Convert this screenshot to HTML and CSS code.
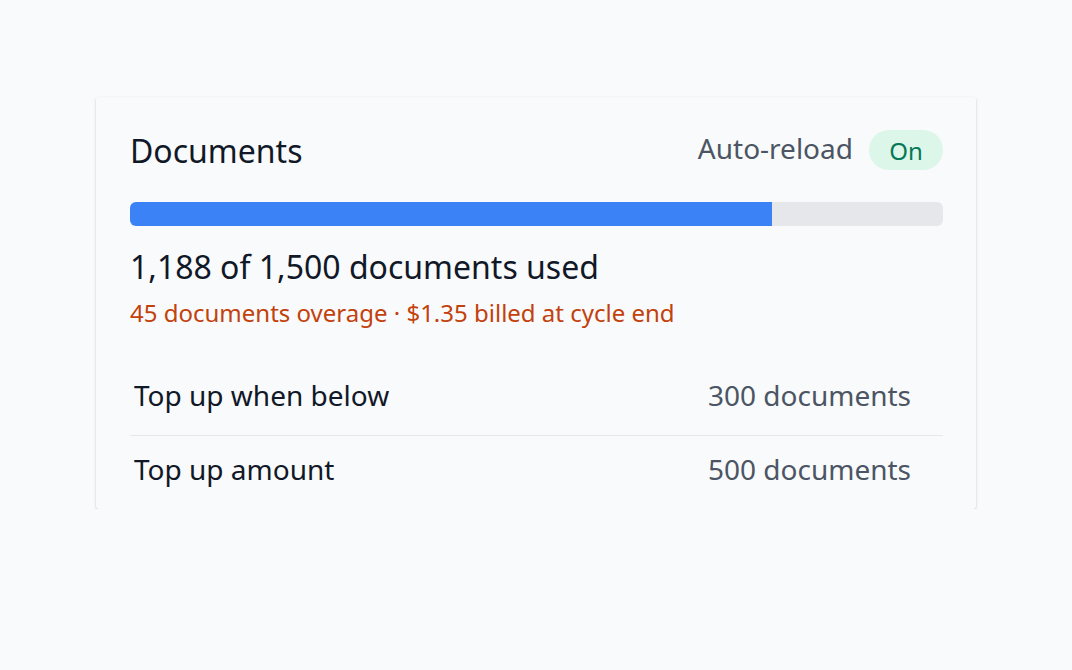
FILE: index.html
```html
<!DOCTYPE html>
<html>
<head>
    <title>Documents</title>
    <link rel="stylesheet" href="styles.css">
</head>
<body>
    <div class="card">
        <div class="card-head">
            <h2 class="title">Documents</h2>
            <div class="reload">
                <span class="reload-label">Auto-reload</span>
                <span class="pill">On</span>
            </div>
        </div>
        <div class="bar">
            <div class="bar-fill" style="width: 79%"></div>
        </div>
        <p class="usage">1,188 of 1,500 documents used</p>
        <p class="overage">45 documents overage · $1.35 billed at cycle end</p>
        <div class="rows">
            <div class="row">
                <span class="row-label">Top up when below</span>
                <span class="row-value">300 documents</span>
            </div>
            <div class="row">
                <span class="row-label">Top up amount</span>
                <span class="row-value">500 documents</span>
            </div>
        </div>
    </div>
</body>
</html>
```

FILE: styles.css
```css
body {
    margin: 0;
    padding-top: 97px;
    background: #f9fafb;
    font-family: "Noto Sans", sans-serif;
    color: #111827;
}
.card {
    width: 880px;
    margin: 0 auto;
    box-sizing: border-box;
    padding: 30px 33px 0 34px;
    background: #f9fafb;
    border-radius: 3px;
    box-shadow: 0 1px 3px rgba(0, 0, 0, 0.15), 0 1px 2px rgba(0, 0, 0, 0.07);
}
.card-head {
    display: flex;
    justify-content: space-between;
    align-items: center;
    height: 46px;
}
.title {
    margin: 0;
    font-size: 32px;
    font-weight: 400;
}
.reload {
    display: flex;
    align-items: center;
    gap: 16px;
}
.reload-label {
    font-size: 28px;
    color: #4b5563;
    margin-top: -4px;
}
.pill {
    display: inline-flex;
    align-items: center;
    justify-content: center;
    width: 74px;
    height: 40px;
    border-radius: 20px;
    background: #dcf7e9;
    color: #047857;
    font-size: 24px;
}
.bar {
    margin-top: 29px;
    height: 24px;
    border-radius: 6px;
    background: #e5e7eb;
    overflow: hidden;
}
.bar-fill {
    height: 100%;
    background: #3b82f6;
}
.usage {
    margin: 20px 0 0;
    font-size: 32px;
    line-height: 42px;
}
.overage {
    margin: 9px 0 0;
    font-size: 24px;
    line-height: 32px;
    color: #c2410c;
}
.rows {
    margin-top: 28px;
}
.row {
    display: flex;
    justify-content: space-between;
    align-items: center;
    box-sizing: border-box;
    height: 78px;
    padding: 0 32px 2px 4px;
    font-size: 28px;
}
.row + .row {
    height: 74px;
    padding-bottom: 7px;
    border-top: 1.5px solid #e5e7eb;
}
.row-value {
    color: #4b5563;
}
```
